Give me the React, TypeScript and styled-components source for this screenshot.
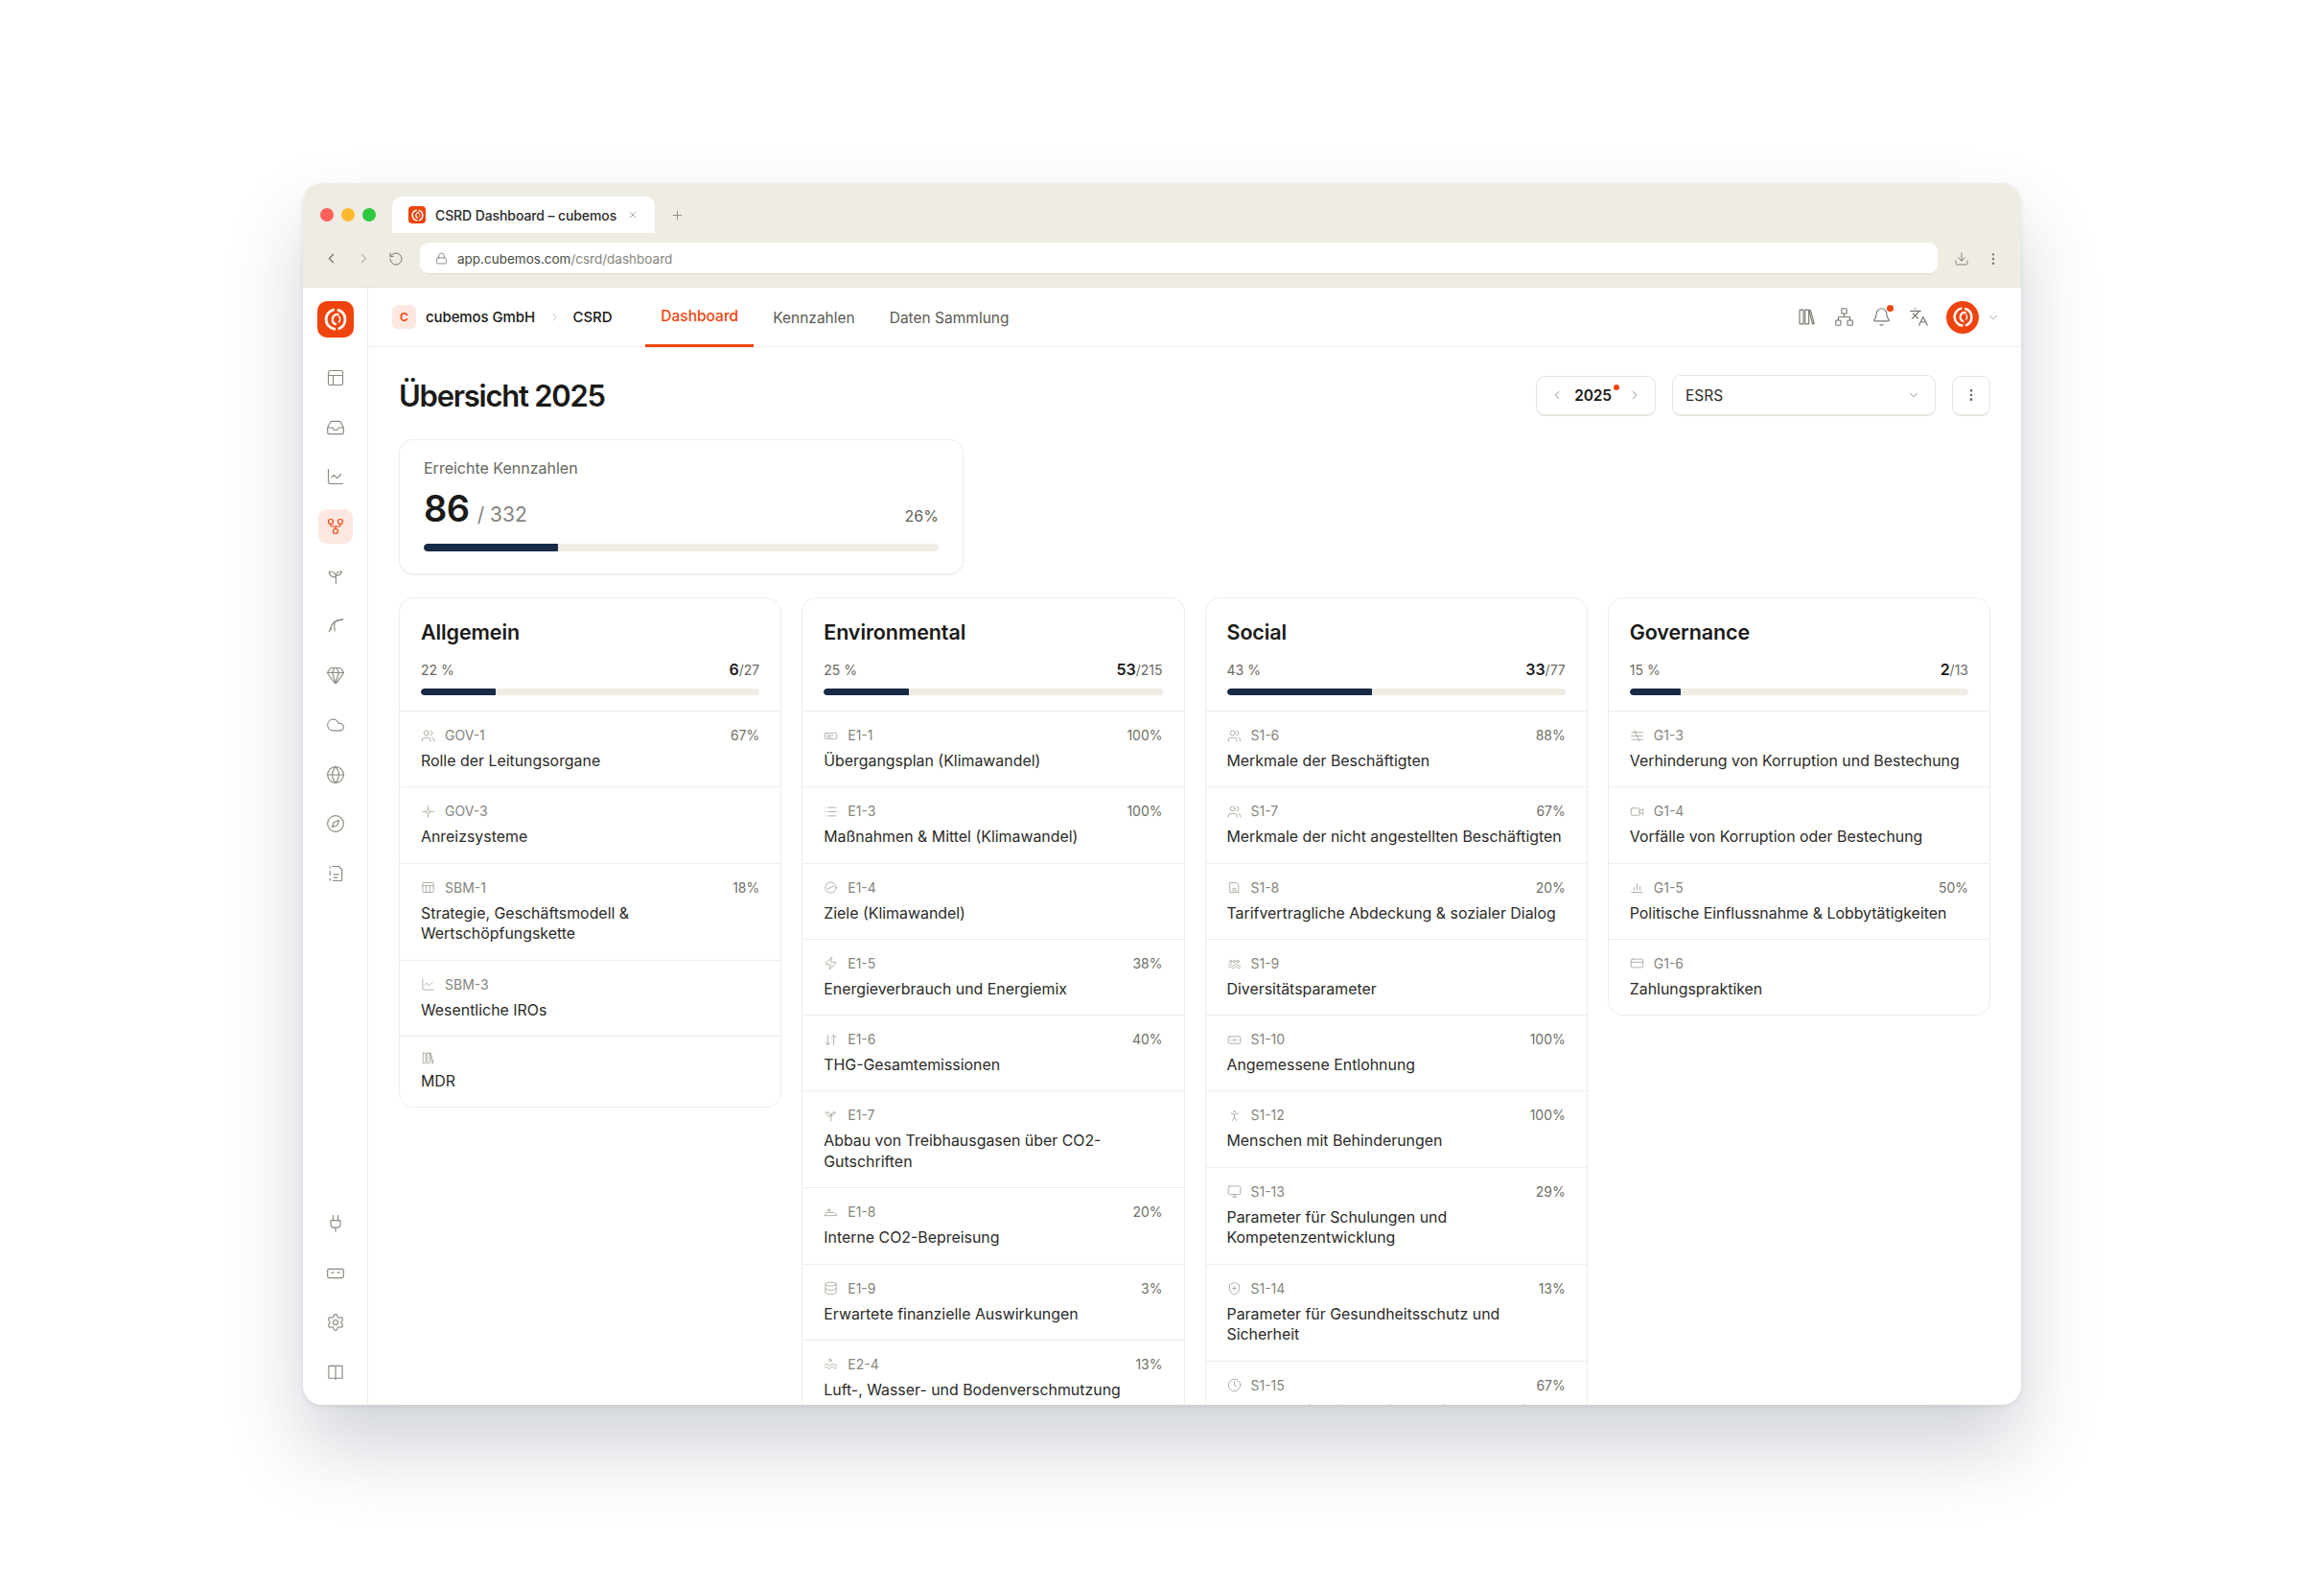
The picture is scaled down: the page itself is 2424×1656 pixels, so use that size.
import * as React from 'react';
import styled, { createGlobalStyle } from 'styled-components';
import {
  ArrowDownUp,
  Banknote,
  Bell,
  ChartLine,
  ChevronDown,
  ChevronLeft,
  ChevronRight,
  Clock,
  Cloud,
  Compass,
  CreditCard,
  Database,
  Download,
  EllipsisVertical,
  Gem,
  GitFork,
  Globe,
  Inbox,
  Languages,
  List,
  Lock,
  Monitor,
  Network,
  PanelsTopLeft,
  PersonStanding,
  Plug,
  Plus,
  RotateCcw,
  Settings,
  ShieldPlus,
  Users,
  Video,
  X,
  Zap,
} from 'lucide-react';

const Colors = {
  orange: '#f0440e',
  orangeSoft: '#fce8e0',
  chrome: '#efece4',
  line: '#efede7',
  navy: '#172b47',
  track: '#efece5',
  ink: '#1a1a18',
  body: '#2b2b28',
  muted: '#85857c',
  icon: '#8a8a80',
  rowIcon: '#a5a59b',
};

const GlobalStyle = createGlobalStyle`
  html, body {
    margin: 0;
    background: #fff;
  }
  body {
    font-family: Inter, "Noto Sans", sans-serif;
    color: ${Colors.ink};
    -webkit-font-smoothing: antialiased;
  }
`;

const Glyph = ({ size = 16, stroke = 1.4, children }: { size?: number; stroke?: number; children: React.ReactNode }) => (
  <svg width={size} height={size} viewBox="0 0 24 24" fill="none" stroke="currentColor" strokeWidth={stroke} strokeLinecap="round" strokeLinejoin="round">
    {children}
  </svg>
);

const LogoMark = ({ size }: { size: number }) => (
  <svg width={size} height={size} viewBox="0 0 24 24" fill="none" stroke="#fff" strokeLinecap="round">
    <path d="M14.500 3.800a8.800 8.800 0 0 1 .8 16.400" strokeWidth={2.4} />
    <path d="M11 20.700A8.800 8.800 0 0 1 10 3.500" strokeWidth={2.4} />
    <path d="M14.200 7.600a4.600 4.600 0 0 0-2.200 8.800" strokeWidth={2} />
    <path d="M15 9.600a3.400 3.400 0 0 1 0 4.800" strokeWidth={1.4} />
  </svg>
);

const Books = ({ size, stroke = 1.4 }: { size: number; stroke?: number }) => (
  <Glyph size={size} stroke={stroke}>
    <rect x="3.500" y="3.500" width="4.500" height="17" rx="0.500" />
    <rect x="10" y="3.500" width="4.500" height="17" rx="0.500" />
    <path d="M16.500 3.800l4.300 16.200-1.800.6-4.300-16.200z" />
  </Glyph>
);

const Seedling = ({ size }: { size: number }) => (
  <Glyph size={size}>
    <path d="M12.500 21v-9" />
    <path d="M12.500 13c0-4-3-7-8.500-7 0 4.500 3.500 7 8.500 7z" />
    <path d="M12.500 11c0-2.500 2.500-5 7-5 0 3-3 5-7 5z" />
  </Glyph>
);

const FeatherGlyph = ({ size }: { size: number }) => (
  <Glyph size={size}>
    <path d="M21 5c-8 0-14 3-16 13" />
    <path d="M4 20l3-4M11 9c-1 3-1 6 0 10M21 5c-3 0-6 .5-8 2" />
  </Glyph>
);

const DashedFile = ({ size }: { size: number }) => (
  <Glyph size={size}>
    <path d="M8 3h8l4 4v13a1 1 0 0 1-1 1H9M5 5V3.500M5 9v5M5 18v2.500" />
    <path d="M10 13h6M10 17h4" />
  </Glyph>
);

const KeyCard = ({ size }: { size: number }) => (
  <Glyph size={size}>
    <rect x="2" y="6.500" width="20" height="11" rx="1.500" />
    <path d="M7 11h2.500M14.500 11H17" />
  </Glyph>
);

const SquareBook = ({ size }: { size: number }) => (
  <Glyph size={size}>
    <path d="M3.500 4h17v15.500h-17zM12 4v17" />
  </Glyph>
);

const SmallCross = ({ size }: { size: number }) => (
  <Glyph size={size}>
    <circle cx="12" cy="12" r="3" />
    <path d="M12 3v5M12 16v5M3 12h5M16 12h5" />
  </Glyph>
);

const TableHead = ({ size }: { size: number }) => (
  <Glyph size={size}>
    <rect x="3" y="4" width="18" height="16" rx="1" />
    <path d="M3 9h18M9 9v11M15 9v11" />
  </Glyph>
);

const CardLines = ({ size }: { size: number }) => (
  <Glyph size={size}>
    <rect x="2" y="7" width="20" height="10" rx="2" />
    <path d="M6 11h10M6 14h6" />
  </Glyph>
);

const TargetTick = ({ size }: { size: number }) => (
  <Glyph size={size}>
    <circle cx="12" cy="12" r="9" />
    <path d="M7 14.500l10-5" />
  </Glyph>
);

const Iron = ({ size }: { size: number }) => (
  <Glyph size={size}>
    <path d="M2 17h20c0-3-3-5-7-5H7" />
    <circle cx="9" cy="8" r="2" />
    <path d="M2 17l3-6" />
  </Glyph>
);

const Swimmer = ({ size }: { size: number }) => (
  <Glyph size={size}>
    <circle cx="11" cy="6" r="2.200" />
    <path d="M2 13c2-2 3-2 5 0s3 2 5 0 3-2 5 0 3 2 5 0M2 18c2-2 3-2 5 0s3 2 5 0 3-2 5 0 3 2 5 0" />
  </Glyph>
);

const FileLines = ({ size }: { size: number }) => (
  <Glyph size={size}>
    <path d="M5 4h10l4 4v12H5z" />
    <path d="M9 14h6M9 17h6" />
  </Glyph>
);

const People = ({ size }: { size: number }) => (
  <Glyph size={size}>
    <circle cx="6" cy="9" r="2" />
    <circle cx="12" cy="9" r="2" />
    <circle cx="18" cy="9" r="2" />
    <path d="M2 15c2-2 3-2 5 0s3 2 5 0 3-2 5 0 3 2 5 0M2 19c2-2 3-2 5 0s3 2 5 0 3-2 5 0 3 2 5 0" />
  </Glyph>
);

const SlashLines = ({ size }: { size: number }) => (
  <Glyph size={size}>
    <path d="M3 6h18M3 12h18M3 18h18M8 3l8 18" />
  </Glyph>
);

const BaseBars = ({ size }: { size: number }) => (
  <Glyph size={size}>
    <path d="M3 20h18M7 16v-4M12 16V6M17 16v-6" />
  </Glyph>
);

type IconProps = { size: number };
type IconType = React.ComponentType<IconProps>;

const thin = (Icon: React.ComponentType<any>): IconType => ({ size }: IconProps) => <Icon size={size} strokeWidth={1.4} />;

type Row = { icon: IconType; code?: string; title: string; pct?: string };
type Column = { name: string; pct: number; done: number; total: number; rows: Row[] };

const columns: Column[] = [
  {
    name: 'Allgemein',
    pct: 22,
    done: 6,
    total: 27,
    rows: [
      { icon: thin(Users), code: 'GOV-1', title: 'Rolle der Leitungsorgane', pct: '67%' },
      { icon: SmallCross, code: 'GOV-3', title: 'Anreizsysteme' },
      { icon: TableHead, code: 'SBM-1', title: 'Strategie, Geschäftsmodell & Wertschöpfungskette', pct: '18%' },
      { icon: thin(ChartLine), code: 'SBM-3', title: 'Wesentliche IROs' },
      { icon: Books, title: 'MDR' },
    ],
  },
  {
    name: 'Environmental',
    pct: 25,
    done: 53,
    total: 215,
    rows: [
      { icon: CardLines, code: 'E1-1', title: 'Übergangsplan (Klimawandel)', pct: '100%' },
      { icon: thin(List), code: 'E1-3', title: 'Maßnahmen & Mittel (Klimawandel)', pct: '100%' },
      { icon: TargetTick, code: 'E1-4', title: 'Ziele (Klimawandel)' },
      { icon: thin(Zap), code: 'E1-5', title: 'Energieverbrauch und Energiemix', pct: '38%' },
      { icon: thin(ArrowDownUp), code: 'E1-6', title: 'THG-Gesamtemissionen', pct: '40%' },
      { icon: Seedling, code: 'E1-7', title: 'Abbau von Treibhausgasen über CO2-Gutschriften' },
      { icon: Iron, code: 'E1-8', title: 'Interne CO2-Bepreisung', pct: '20%' },
      { icon: thin(Database), code: 'E1-9', title: 'Erwartete finanzielle Auswirkungen', pct: '3%' },
      { icon: Swimmer, code: 'E2-4', title: 'Luft-, Wasser- und Bodenverschmutzung', pct: '13%' },
    ],
  },
  {
    name: 'Social',
    pct: 43,
    done: 33,
    total: 77,
    rows: [
      { icon: thin(Users), code: 'S1-6', title: 'Merkmale der Beschäftigten', pct: '88%' },
      { icon: thin(Users), code: 'S1-7', title: 'Merkmale der nicht angestellten Beschäftigten', pct: '67%' },
      { icon: FileLines, code: 'S1-8', title: 'Tarifvertragliche Abdeckung & sozialer Dialog', pct: '20%' },
      { icon: People, code: 'S1-9', title: 'Diversitätsparameter' },
      { icon: thin(Banknote), code: 'S1-10', title: 'Angemessene Entlohnung', pct: '100%' },
      { icon: thin(PersonStanding), code: 'S1-12', title: 'Menschen mit Behinderungen', pct: '100%' },
      { icon: thin(Monitor), code: 'S1-13', title: 'Parameter für Schulungen und Kompetenzentwicklung', pct: '29%' },
      { icon: thin(ShieldPlus), code: 'S1-14', title: 'Parameter für Gesundheitsschutz und Sicherheit', pct: '13%' },
      { icon: thin(Clock), code: 'S1-15', title: 'Parameter für die Vereinbarkeit von Beruf und Privatleben', pct: '67%' },
    ],
  },
  {
    name: 'Governance',
    pct: 15,
    done: 2,
    total: 13,
    rows: [
      { icon: SlashLines, code: 'G1-3', title: 'Verhinderung von Korruption und Bestechung' },
      { icon: thin(Video), code: 'G1-4', title: 'Vorfälle von Korruption oder Bestechung' },
      { icon: BaseBars, code: 'G1-5', title: 'Politische Einflussnahme & Lobbytätigkeiten', pct: '50%' },
      { icon: thin(CreditCard), code: 'G1-6', title: 'Zahlungspraktiken' },
    ],
  },
];

const topNav: { icon: IconType; active?: boolean }[] = [
  { icon: thin(PanelsTopLeft) },
  { icon: thin(Inbox) },
  { icon: thin(ChartLine) },
  { icon: thin(GitFork), active: true },
  { icon: Seedling },
  { icon: FeatherGlyph },
  { icon: thin(Gem) },
  { icon: thin(Cloud) },
  { icon: thin(Globe) },
  { icon: thin(Compass) },
  { icon: DashedFile },
];

const bottomNav: IconType[] = [thin(Plug), KeyCard, thin(Settings), SquareBook];

export default function App() {
  return (
    <Page>
      <GlobalStyle />
      <Window>
        <Chrome>
          <TabRow>
            <Lights>
              <Light $color="#ff5f5a" />
              <Light $color="#fdb92e" />
              <Light $color="#2dc83f" />
            </Lights>
            <BrowserTab>
              <Favicon>
                <LogoMark size={15} />
              </Favicon>
              <TabTitle>CSRD Dashboard – cubemos</TabTitle>
              <TabClose>
                <X size={12} strokeWidth={1.4} />
              </TabClose>
            </BrowserTab>
            <NewTab>
              <Plus size={15} strokeWidth={1.4} />
            </NewTab>
          </TabRow>
          <UrlRow>
            <NavButton>
              <ChevronLeft size={17} strokeWidth={1.5} />
            </NavButton>
            <NavButton $dim>
              <ChevronRight size={17} strokeWidth={1.5} />
            </NavButton>
            <NavButton>
              <RotateCcw size={16} strokeWidth={1.4} />
            </NavButton>
            <UrlBar>
              <Lock size={13} strokeWidth={1.4} />
              <UrlText>
                app.cubemos.com<UrlPath>/csrd/dashboard</UrlPath>
              </UrlText>
            </UrlBar>
            <NavButton>
              <Download size={16} strokeWidth={1.3} />
            </NavButton>
            <NavButton>
              <EllipsisVertical size={16} strokeWidth={1.6} />
            </NavButton>
          </UrlRow>
        </Chrome>
        <Body>
          <Sidebar>
            <LogoTile>
              <LogoMark size={28} />
            </LogoTile>
            <NavList>
              {topNav.map(({ icon: Icon, active }, i) => (
                <NavItem key={i} $active={active}>
                  <Icon size={20} />
                </NavItem>
              ))}
            </NavList>
            <NavList $bottom>
              {bottomNav.map((Icon, i) => (
                <NavItem key={i}>
                  <Icon size={20} />
                </NavItem>
              ))}
            </NavList>
          </Sidebar>
          <Content>
            <TopBar>
              <CompanyChip>C</CompanyChip>
              <Crumb>cubemos GmbH</Crumb>
              <CrumbArrow>
                <ChevronRight size={13} strokeWidth={1.4} />
              </CrumbArrow>
              <Crumb>CSRD</Crumb>
              <Tabs>
                <Tab $active>Dashboard</Tab>
                <Tab>Kennzahlen</Tab>
                <Tab>Daten Sammlung</Tab>
              </Tabs>
              <TopActions>
                <Books size={21} stroke={1.3} />
                <Network size={21} strokeWidth={1.3} />
                <BellWrap>
                  <Bell size={21} strokeWidth={1.3} />
                  <BellDot />
                </BellWrap>
                <Languages size={21} strokeWidth={1.3} />
                <Avatar>
                  <LogoMark size={25} />
                </Avatar>
                <AvatarCaret>
                  <ChevronDown size={14} strokeWidth={1.4} />
                </AvatarCaret>
              </TopActions>
            </TopBar>
            <Main>
              <TitleRow>
                <Title>Übersicht 2025</Title>
                <Controls>
                  <YearBox>
                    <ChevronLeft size={14} strokeWidth={1.4} />
                    <YearLabel>
                      2025
                      <YearDot />
                    </YearLabel>
                    <ChevronRight size={14} strokeWidth={1.4} />
                  </YearBox>
                  <SelectBox>
                    <span>ESRS</span>
                    <ChevronDown size={14} strokeWidth={1.4} />
                  </SelectBox>
                  <MoreButton>
                    <EllipsisVertical size={16} strokeWidth={2} />
                  </MoreButton>
                </Controls>
              </TitleRow>
              <KpiCard>
                <KpiLabel>Erreichte Kennzahlen</KpiLabel>
                <KpiLine>
                  <KpiValue>86</KpiValue>
                  <KpiTotal>/ 332</KpiTotal>
                  <KpiPct>26%</KpiPct>
                </KpiLine>
                <Track $height={8}>
                  <Fill style={{ width: '26%' }} />
                </Track>
              </KpiCard>
              <Grid>
                {columns.map((col) => (
                  <Card key={col.name}>
                    <CardHead>
                      <CardTitle>{col.name}</CardTitle>
                      <StatLine>
                        <span>{col.pct} %</span>
                        <span>
                          <StatDone>{col.done}</StatDone>/{col.total}
                        </span>
                      </StatLine>
                      <Track $height={7}>
                        <Fill style={{ width: `${col.pct}%` }} />
                      </Track>
                    </CardHead>
                    {col.rows.map((row) => (
                      <RowItem key={row.title}>
                        <RowMeta>
                          <RowIcon>
                            <row.icon size={15} />
                          </RowIcon>
                          {row.code && <RowCode>{row.code}</RowCode>}
                          {row.pct && <RowPct>{row.pct}</RowPct>}
                        </RowMeta>
                        <RowTitle>{row.title}</RowTitle>
                      </RowItem>
                    ))}
                  </Card>
                ))}
              </Grid>
            </Main>
          </Content>
        </Body>
      </Window>
    </Page>
  );
}

const Page = styled.div`
  min-height: 100vh;
  display: flex;
  align-items: center;
  justify-content: center;
`;

const Window = styled.div`
  width: 1792px;
  height: 1274px;
  display: flex;
  flex-direction: column;
  border-radius: 20px;
  overflow: hidden;
  background: #fff;
  box-shadow: 0 44px 80px rgba(60, 72, 92, 0.24), 0 2px 5px rgba(60, 72, 92, 0.1);
`;

const Chrome = styled.div`
  flex: none;
  height: 109px;
  box-sizing: border-box;
  background: ${Colors.chrome};
  border-bottom: 1px solid #e5e2d9;
`;

const TabRow = styled.div`
  height: 52px;
  box-sizing: border-box;
  padding: 14px 0 0 18px;
  display: flex;
  align-items: center;
`;

const Lights = styled.div`
  display: flex;
  gap: 8px;
  margin-right: 17px;
`;

const Light = styled.span<{ $color: string }>`
  width: 14px;
  height: 14px;
  border-radius: 50%;
  background: ${(p) => p.$color};
`;

const BrowserTab = styled.div`
  width: 274px;
  height: 38px;
  box-sizing: border-box;
  padding: 0 17px;
  display: flex;
  align-items: center;
  border-radius: 10px 10px 0 0;
  background: #fff;
`;

const Favicon = styled.span`
  width: 18px;
  height: 18px;
  border-radius: 4px;
  background: ${Colors.orange};
  display: flex;
  align-items: center;
  justify-content: center;
  margin-right: 10px;
`;

const TabTitle = styled.span`
  font-size: 14px;
  font-weight: 500;
  letter-spacing: -0.1px;
  white-space: nowrap;
  color: ${Colors.body};
`;

const TabClose = styled.span`
  display: flex;
  margin-left: auto;
  color: ${Colors.muted};
`;

const NewTab = styled.span`
  display: flex;
  margin-left: 16px;
  color: ${Colors.muted};
`;

const UrlRow = styled.div`
  height: 33px;
  margin-top: 10px;
  padding: 0 21px;
  display: flex;
  align-items: center;
  gap: 17px;
`;

const NavButton = styled.span<{ $dim?: boolean }>`
  display: flex;
  color: ${(p) => (p.$dim ? '#b4b4aa' : '#6f6f66')};
`;

const UrlBar = styled.div`
  flex: 1;
  height: 33px;
  box-sizing: border-box;
  padding: 1px 16px 0;
  display: flex;
  align-items: center;
  gap: 10px;
  border-radius: 9px;
  background: #fff;
  border-bottom: 1px solid #dfdcd2;
  color: #6f6f66;
`;

const UrlText = styled.span`
  padding-top: 1px;
  font-size: 13.500px;
  color: #4b4b45;
`;

const UrlPath = styled.span`
  color: ${Colors.muted};
`;

const Body = styled.div`
  flex: 1;
  min-height: 0;
  display: flex;
`;

const Sidebar = styled.aside`
  flex: none;
  width: 68px;
  box-sizing: border-box;
  padding: 14px 0 16px;
  display: flex;
  flex-direction: column;
  align-items: center;
  border-right: 1px solid ${Colors.line};
`;

const LogoTile = styled.div`
  width: 38px;
  height: 38px;
  border-radius: 10px;
  background: ${Colors.orange};
  display: flex;
  align-items: center;
  justify-content: center;
`;

const NavList = styled.nav<{ $bottom?: boolean }>`
  display: flex;
  flex-direction: column;
  gap: 15.700px;
  margin-top: ${(p) => (p.$bottom ? 'auto' : '24px')};
`;

const NavItem = styled.span<{ $active?: boolean }>`
  width: 36px;
  height: 36px;
  border-radius: 9px;
  display: flex;
  align-items: center;
  justify-content: center;
  color: ${(p) => (p.$active ? Colors.orange : Colors.icon)};
  background: ${(p) => (p.$active ? Colors.orangeSoft : 'transparent')};
`;

const Content = styled.div`
  flex: 1;
  min-width: 0;
  display: flex;
  flex-direction: column;
`;

const TopBar = styled.header`
  flex: none;
  height: 62px;
  box-sizing: border-box;
  padding: 0 22.500px 0 25px;
  display: flex;
  align-items: stretch;
  border-bottom: 1px solid ${Colors.line};
`;

const CompanyChip = styled.span`
  align-self: center;
  width: 25px;
  height: 25px;
  margin-right: 10px;
  border-radius: 6px;
  background: ${Colors.orangeSoft};
  color: ${Colors.orange};
  font-size: 12px;
  font-weight: 600;
  display: flex;
  align-items: center;
  justify-content: center;
`;

const Crumb = styled.span`
  align-self: center;
  font-size: 15px;
  font-weight: 500;
  letter-spacing: -0.1px;
  color: ${Colors.ink};
`;

const CrumbArrow = styled.span`
  align-self: center;
  display: flex;
  margin: 0 13px 0 13.500px;
  color: #a5a59b;
`;

const Tabs = styled.nav`
  display: flex;
  gap: 4px;
  margin: 0 0 -1px 35px;
`;

const Tab = styled.a<{ $active?: boolean }>`
  padding: 0 16px;
  display: flex;
  align-items: center;
  font-size: 15.500px;
  font-weight: ${(p) => (p.$active ? 500 : 400)};
  color: ${(p) => (p.$active ? Colors.orange : '#5a5a53')};
  border-bottom: ${(p) => (p.$active ? `3px solid ${Colors.orange}` : 'none')};
`;

const TopActions = styled.div`
  margin-left: auto;
  display: flex;
  align-items: center;
  gap: 18px;
  color: #77776e;
`;

const BellWrap = styled.span`
  position: relative;
  display: flex;
`;

const BellDot = styled.span`
  position: absolute;
  top: -2px;
  right: -2px;
  width: 7px;
  height: 7px;
  border-radius: 50%;
  background: ${Colors.orange};
`;

const Avatar = styled.span`
  width: 34px;
  height: 34px;
  border-radius: 50%;
  background: ${Colors.orange};
  display: flex;
  align-items: center;
  justify-content: center;
`;

const AvatarCaret = styled.span`
  display: flex;
  margin-left: -10.500px;
  color: #8a8a80;
`;

const Main = styled.main`
  flex: 1;
  min-height: 0;
  overflow: hidden;
  padding: 29px 32px 0;
`;

const TitleRow = styled.div`
  height: 43px;
  display: flex;
  align-items: center;
  justify-content: space-between;
`;

const Title = styled.h1`
  margin: 0;
  font-size: 31px;
  font-weight: 600;
  letter-spacing: -1.250px;
  color: ${Colors.ink};
`;

const Controls = styled.div`
  display: flex;
  align-items: center;
  gap: 17px;
`;

const ControlBox = styled.div`
  box-sizing: border-box;
  display: flex;
  align-items: center;
  border: 1px solid #e6e4dc;
  border-bottom-width: 2px;
  border-radius: 9px;
  background: #fff;
  color: #77776e;
`;

const YearBox = styled(ControlBox)`
  width: 125px;
  height: 42px;
  padding: 0 14px;
  justify-content: space-between;
`;

const YearLabel = styled.span`
  position: relative;
  margin-right: 6px;
  font-size: 15.500px;
  font-weight: 600;
  letter-spacing: -0.2px;
  color: ${Colors.ink};
`;

const YearDot = styled.span`
  position: absolute;
  top: -2px;
  right: -8px;
  width: 6px;
  height: 6px;
  border-radius: 50%;
  background: ${Colors.orange};
`;

const SelectBox = styled(ControlBox)`
  width: 275px;
  height: 43px;
  padding: 0 15px 0 13px;
  justify-content: space-between;
  font-size: 15.500px;
  & > span {
    color: ${Colors.body};
  }
`;

const MoreButton = styled(ControlBox)`
  width: 40px;
  height: 42px;
  justify-content: center;
  color: #66665e;
`;

const KpiCard = styled.section`
  width: 589px;
  height: 142px;
  box-sizing: border-box;
  margin-top: 24px;
  padding: 19px 25px 0;
  border: 1px solid ${Colors.line};
  border-bottom-width: 2px;
  border-radius: 15px;
`;

const KpiLabel = styled.div`
  font-size: 16px;
  line-height: 20px;
  color: #66665e;
`;

const KpiLine = styled.div`
  margin: 9px 0 14px;
  height: 46px;
  display: flex;
  align-items: baseline;
`;

const KpiValue = styled.span`
  font-size: 38px;
  line-height: 46px;
  font-weight: 600;
  letter-spacing: -0.5px;
`;

const KpiTotal = styled.span`
  margin-left: 8px;
  font-size: 21px;
  color: #85857c;
`;

const KpiPct = styled.span`
  margin-left: auto;
  font-size: 16px;
  color: #5f5f58;
`;

const Track = styled.div<{ $height: number }>`
  height: ${(p) => p.$height}px;
  border-radius: 4px;
  background: ${Colors.track};
  overflow: hidden;
`;

const Fill = styled.div`
  height: 100%;
  background: ${Colors.navy};
  border-radius: 4px 1px 1px 4px;
`;

const Grid = styled.div`
  margin-top: 23px;
  display: grid;
  grid-template-columns: repeat(4, 1fr);
  gap: 21px;
  align-items: start;
`;

const Card = styled.article`
  border: 1px solid ${Colors.line};
  border-radius: 15px;
  background: #fff;
`;

const CardHead = styled.div`
  padding: 21px 22px 16px;
`;

const CardTitle = styled.h2`
  margin: 0;
  font-size: 21.500px;
  line-height: 28px;
  font-weight: 600;
  letter-spacing: -0.1px;
`;

const StatLine = styled.div`
  margin: 15px 0 10px;
  height: 20px;
  display: flex;
  align-items: center;
  justify-content: space-between;
  font-size: 14px;
  color: #6a6a62;
`;

const StatDone = styled.b`
  font-size: 16px;
  font-weight: 600;
  color: ${Colors.ink};
`;

const RowItem = styled.div`
  padding: 15px 22px 15.500px;
  border-top: 1px solid ${Colors.line};
`;

const RowMeta = styled.div`
  display: flex;
  align-items: center;
`;

const RowIcon = styled.span`
  display: flex;
  margin-right: 10px;
  color: ${Colors.rowIcon};
`;

const RowCode = styled.span`
  font-size: 14px;
  line-height: 20px;
  color: ${Colors.muted};
`;

const RowPct = styled.span`
  margin-left: auto;
  font-size: 14px;
  line-height: 20px;
  color: #6f6f66;
`;

const RowTitle = styled.div`
  margin-top: 6px;
  font-size: 15.900px;
  line-height: 21.750px;
  color: ${Colors.body};
`;
